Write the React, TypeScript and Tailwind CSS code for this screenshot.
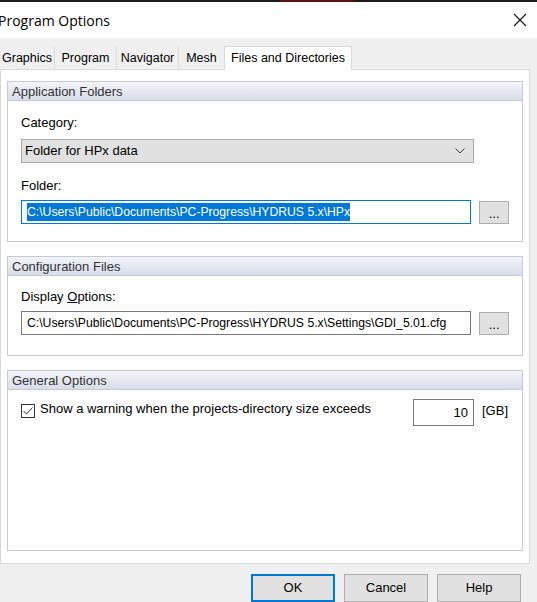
import React from "react";

const ui = { fontFamily: '"Liberation Sans", Arial, sans-serif' };

function GroupBox({ title, children, className }: { title: string; children: React.ReactNode; className?: string }) {
  return (
    <div className={"mx-[6px] border border-[#c6cad6] bg-white " + (className || "")}>
      <div className="h-[19px] border-b border-[#c6cad6] bg-gradient-to-b from-[#f4f5fa] to-[#d9dde9] pl-[4px] text-[13px] leading-[19px] text-[#333]">
        {title}
      </div>
      {children}
    </div>
  );
}

function DotsButton() {
  return (
    <div className="flex h-[23px] w-[30px] items-end justify-center border border-[#adadad] bg-[#e1e1e1] pb-[3px] text-[13px] leading-none text-black">
      ...
    </div>
  );
}

export default function App() {
  return (
    <div className="relative h-[602px] w-[537px] overflow-hidden bg-[#f0f0f0] text-black" style={ui}>
      {/* window top edge */}
      <div className="flex h-[2px]">
        <div className="w-[280px] bg-[#1c1c1c]" />
        <div className="w-[75px] bg-[#5a1414]" />
        <div className="flex-1 bg-[#1c1c1c]" />
      </div>
      {/* title bar */}
      <div className="flex h-[36px] items-center justify-between bg-white">
        <span className="-ml-[2px] text-[14px]" style={{ fontFamily: '"Open Sans", "Liberation Sans", sans-serif' }}>Program Options</span>
        <svg width="14" height="14" viewBox="0 0 14 14" className="mr-[10px]">
          <path d="M1 1 L13 13 M13 1 L1 13" stroke="#111" strokeWidth="1.1" />
        </svg>
      </div>

      {/* tabs */}
      <div className="mt-[8px] flex h-[23px] items-end text-[12.5px]">
        <div className="flex h-[22px] w-[55px] items-center border-r border-[#dadada] pl-[2px]">Graphics</div>
        <div className="flex h-[22px] w-[62px] items-center justify-center border-r border-[#dadada]">Program</div>
        <div className="flex h-[22px] w-[62px] items-center justify-center border-r border-[#dadada]">Navigator</div>
        <div className="flex h-[22px] w-[45px] items-center justify-center">Mesh</div>
        <div className="relative z-10 -mb-px flex h-[24px] w-[128px] items-start justify-center border border-b-0 border-[#d9d9d9] bg-white pt-[2px]">
          Files and Directories
        </div>
      </div>

      {/* tab page */}
      <div className="h-[495px] w-[530px] border border-[#d9d9d9] bg-white pt-[11px]">
        <GroupBox title="Application Folders" className="h-[161px]">
          <div className="px-[13px] pt-[14px] text-[13px]">
            <div className="leading-[16px]">Category:</div>
            <div className="mt-[8px] flex h-[24px] w-[453px] items-center justify-between border border-[#adadad] bg-[#e1e1e1] pl-[3px] pr-[8px]">
              <span>Folder for HPx data</span>
              <svg width="10" height="6" viewBox="0 0 10 6">
                <path d="M0.5 0.5 L5 5 L9.5 0.5" fill="none" stroke="#333" strokeWidth="1" />
              </svg>
            </div>
            <div className="mt-[15px] leading-[16px]">Folder:</div>
            <div className="mt-[6px] flex items-center gap-[8px]">
              <div className="flex h-[24px] w-[453px] items-center overflow-hidden whitespace-nowrap border border-[#0078d7] pl-[5px]">
                <span className="bg-[#0078d7] text-[12.2px] leading-[18px] text-white">C:\Users\Public\Documents\PC-Progress\HYDRUS 5.x\HPx</span>
              </div>
              <DotsButton />
            </div>
          </div>
        </GroupBox>

        <GroupBox title="Configuration Files" className="mt-[14px] h-[100px]">
          <div className="px-[13px] pt-[13px] text-[13px]">
            <div className="leading-[16px]">
              Display <span className="underline">O</span>ptions:
            </div>
            <div className="mt-[6px] flex items-center gap-[8px]">
              <div className="flex h-[24px] w-[453px] items-center overflow-hidden whitespace-nowrap border border-[#7a7a7a] pl-[5px] text-[12.2px]">
                C:\Users\Public\Documents\PC-Progress\HYDRUS 5.x\Settings\GDI_5.01.cfg
              </div>
              <DotsButton />
            </div>
          </div>
        </GroupBox>

        <GroupBox title="General Options" className="mt-[14px] h-[181px]">
          <div className="flex items-start px-[13px] pt-[9px] text-[13px]">
            <div className="mt-[5px] flex h-[14px] w-[14px] items-center justify-center border border-[#333] bg-white">
              <svg width="10" height="8" viewBox="0 0 10 8">
                <path d="M0.5 4 L3.5 7 L9.5 0.5" fill="none" stroke="#333" strokeWidth="1" />
              </svg>
            </div>
            <div className="ml-[5px] mt-[1px] w-[373px] leading-[18px]">Show a warning when the projects-directory size exceeds</div>
            <div className="flex h-[27px] w-[61px] items-center justify-end border border-[#7a7a7a] pr-[5px]">10</div>
            <div className="ml-[8px] mt-[3px] leading-[18px]">[GB]</div>
          </div>
        </GroupBox>
      </div>

      {/* buttons */}
      <div className="mt-[10px] flex justify-end gap-[9px] pr-[16px] text-[13px]">
        <div className="flex h-[28px] w-[84px] items-center justify-center border-2 border-[#0078d7] bg-[#e1e1e1]">OK</div>
        <div className="flex h-[28px] w-[84px] items-center justify-center border border-[#adadad] bg-[#e1e1e1]">Cancel</div>
        <div className="flex h-[28px] w-[84px] items-center justify-center border border-[#adadad] bg-[#e1e1e1]">Help</div>
      </div>
    </div>
  );
}
